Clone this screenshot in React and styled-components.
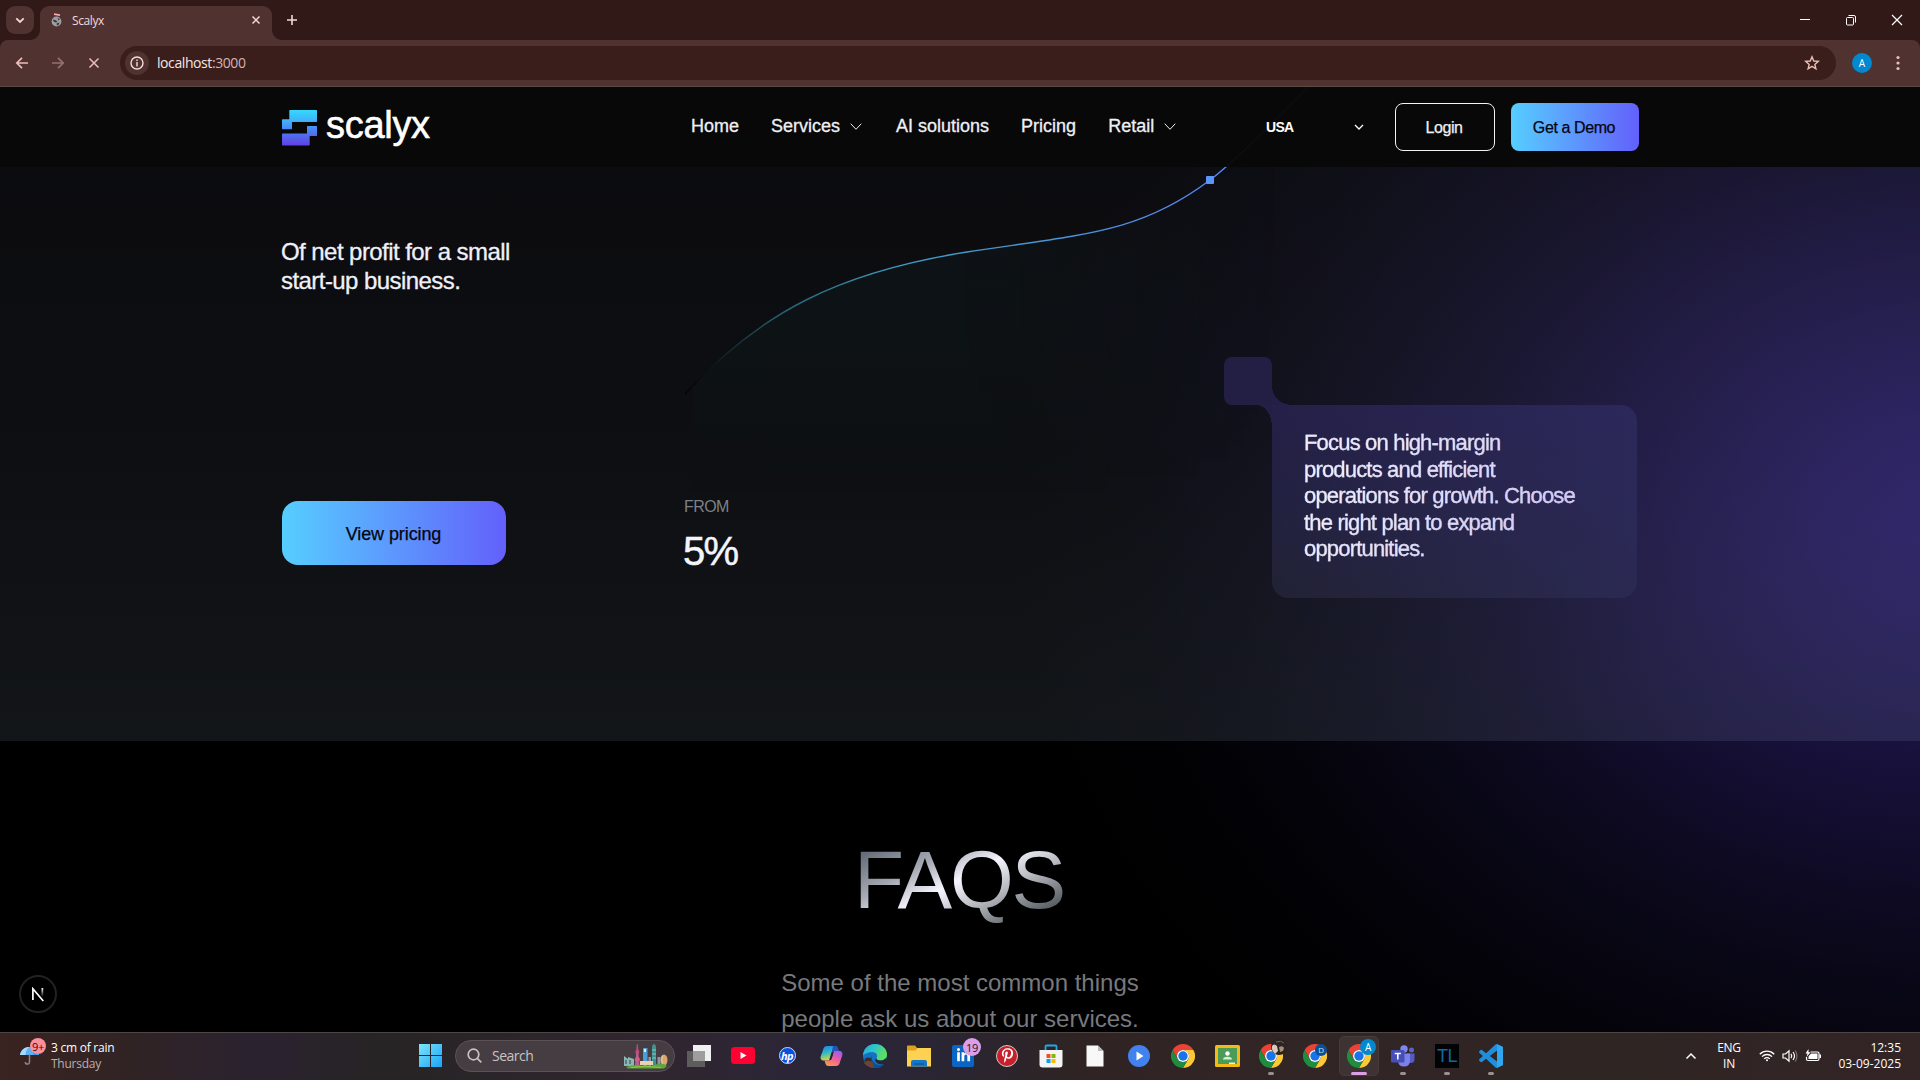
import React from "react";
import styled, { createGlobalStyle, css } from "styled-components";
import { FaPinterestP, FaLinkedinIn } from "react-icons/fa";

const GlobalStyle = createGlobalStyle`
  * { box-sizing: border-box; }
  html, body { margin: 0; background: #000; overflow: hidden; }
  svg { display: block; flex: none; }
`;

const uiFont = `"Open Sans", "Noto Sans", sans-serif`;
const siteFont = `"Liberation Sans", Arial, sans-serif`;

const Screen = styled.div`
  width: 1920px;
  height: 1080px;
  display: flex;
  flex-direction: column;
  overflow: hidden;
  font-family: ${siteFont};
`;

/* ---------- browser chrome ---------- */

const TabStrip = styled.div`
  height: 40px;
  flex: none;
  display: flex;
  align-items: flex-start;
  background: #301916;
  color: #f3d9d5;
`;

const TabSearch = styled.div`
  width: 28px;
  height: 28px;
  margin: 6px 6px 0;
  border-radius: 9px;
  background: #503230;
  display: grid;
  place-items: center;
`;

const Tab = styled.div`
  position: relative;
  width: 232px;
  height: 34px;
  margin-top: 6px;
  padding: 0 10px 6px 11px;
  display: flex;
  align-items: center;
  border-radius: 9px 9px 0 0;
  background: #503230;
  &::before,
  &::after {
    content: "";
    position: absolute;
    bottom: 0;
    width: 10px;
    height: 10px;
  }
  &::before {
    left: -10px;
    background: radial-gradient(circle at 0 0, transparent 9.6px, #503230 10.2px);
  }
  &::after {
    right: -10px;
    background: radial-gradient(circle at 100% 0, transparent 9.6px, #503230 10.2px);
  }
`;

const TabTitle = styled.span`
  flex: 1;
  margin-left: 9px;
  padding-top: 1px;
  font: 12px ${uiFont};
  letter-spacing: -0.4px;
`;

const NewTab = styled.div`
  width: 28px;
  height: 28px;
  margin: 6px 0 0 6px;
  display: grid;
  place-items: center;
`;

const WindowButtons = styled.div`
  margin-left: auto;
  display: flex;
  height: 40px;
  color: #fff;
`;

const WindowButton = styled.div`
  width: 46px;
  display: grid;
  place-items: center;
`;

const ToolbarEdge = styled.div`
  height: 47px;
  flex: none;
  background: #301916;
`;

const Toolbar = styled.div`
  height: 47px;
  display: flex;
  align-items: center;
  padding-bottom: 1px;
  border-bottom: 1px solid #5e4945;
  border-radius: 8px 8px 0 0;
  background: #503230;
  color: #edbdb8;
`;

const ToolButton = styled.div`
  width: ${(p) => p.$w || 36}px;
  height: 34px;
  display: grid;
  place-items: center;
  opacity: ${(p) => (p.$dim ? 0.45 : 1)};
`;

const AddressBar = styled.div`
  flex: 1;
  height: 34px;
  margin-left: 4px;
  padding: 0 16px 0 5px;
  display: flex;
  align-items: center;
  border-radius: 17px;
  background: #391e1c;
`;

const SiteInfo = styled.div`
  width: 24px;
  height: 24px;
  border-radius: 50%;
  display: grid;
  place-items: center;
  background: #503230;
  color: #f5dcd8;
`;

const Url = styled.span`
  flex: 1;
  margin-left: 8px;
  font: 14px ${uiFont};
  letter-spacing: -0.42px;
  color: #f7e6e3;
  span {
    color: #d3b3b0;
  }
`;

const Profile = styled.div`
  width: 20px;
  height: 20px;
  margin: 0 4px 0 16px;
  border-radius: 50%;
  display: grid;
  place-items: center;
  background: #0288d1;
  color: #fff;
  font: 10px ${uiFont};
`;

/* ---------- site ---------- */

const Page = styled.main`
  position: relative;
  height: 945px;
  flex: none;
  display: flex;
  flex-direction: column;
  overflow: hidden;
  background:
    radial-gradient(
      ellipse 940px 760px at 1950px 425px,
      rgba(37, 26, 95, 1) 0%,
      rgba(36, 25, 91, 0.95) 12%,
      rgba(34, 24, 85, 0.84) 24%,
      rgba(31, 22, 77, 0.7) 37%,
      rgba(28, 20, 68, 0.53) 50%,
      rgba(25, 20, 60, 0.36) 63%,
      rgba(22, 18, 54, 0.2) 76%,
      rgba(18, 16, 46, 0.08) 88%,
      rgba(12, 10, 30, 0) 100%
    ),
    #000;
`;

const Nav = styled.nav`
  position: relative;
  z-index: 2;
  height: 80px;
  flex: none;
  display: flex;
  align-items: center;
  padding: 0 281px 0 282px;
  background: rgba(8, 8, 8, 0.96);
  color: #eef0f6;
`;

const Brand = styled.div`
  width: 409px;
  height: 80px;
  display: flex;
  align-items: center;
  gap: 9px;
`;

const Wordmark = styled.span`
  font-size: 38px;
  line-height: 44px;
  letter-spacing: -0.3px;
  color: #fff;
  -webkit-text-stroke: 0.6px #fff;
  padding-bottom: 5px;
`;

const NavLinks = styled.div`
  display: flex;
  gap: 32px;
  padding-bottom: 2px;
`;

const NavLink = styled.div`
  display: flex;
  align-items: center;
  gap: 8px;
  font-size: 18px;
  line-height: 24px;
  white-space: nowrap;
  -webkit-text-stroke: 0.3px #eef0f6;
`;

const Region = styled.div`
  width: 98px;
  margin-left: auto;
  margin-right: 31px;
  display: flex;
  align-items: center;
  justify-content: space-between;
  font-size: 14px;
  font-weight: 700;
  letter-spacing: -0.7px;
  color: #fff;
`;

const gradientFill = css`
  background: linear-gradient(90deg, #56ceff 0%, #6360fb 100%);
  color: #050510;
`;

const NavButton = styled.div`
  width: ${(p) => p.$w}px;
  height: 48px;
  margin-left: ${(p) => p.$gap || 0}px;
  display: grid;
  place-items: center;
  padding: 1px 2px 0 0;
  border-radius: 8px;
  font-size: 16px;
  letter-spacing: -0.4px;
  -webkit-text-stroke: 0.25px currentColor;
  ${(p) =>
    p.$filled
      ? gradientFill
      : css`
          border: 1px solid #f4f4f8;
          color: #eef0f6;
        `}
`;

const CurveLayer = styled.svg`
  position: absolute;
  left: 0;
  top: 0;
`;

const Hero = styled.section`
  height: 574px;
  flex: none;
  display: flex;
  padding: 70px 283px 176px 281px;
  background: linear-gradient(
    180deg,
    rgba(188, 190, 240, 0.062) 0%,
    rgba(178, 198, 236, 0.075) 50%,
    rgba(176, 204, 236, 0.105) 100%
  );
`;

const Pitch = styled.div`
  width: 403px;
  display: flex;
  flex-direction: column;
  justify-content: space-between;
`;

const Lead = styled.p`
  margin: 0;
  font-size: 24px;
  line-height: 29px;
  letter-spacing: -0.56px;
  color: #eff1fa;
  -webkit-text-stroke: 0.3px #eff1fa;
`;

const PricingButton = styled.div`
  width: 224px;
  height: 64px;
  margin-left: 1px;
  padding: 3px 1px 0 0;
  display: grid;
  place-items: center;
  border-radius: 16px;
  font-size: 18px;
  letter-spacing: -0.1px;
  -webkit-text-stroke: 0.25px currentColor;
  ${gradientFill}
`;

const Stat = styled.div`
  align-self: flex-end;
  height: 71px;
  margin-bottom: -4px;
  display: flex;
  flex-direction: column;
  justify-content: space-between;
`;

const StatLabel = styled.span`
  font-size: 16px;
  line-height: 18px;
  letter-spacing: -0.6px;
  color: #7d8086;
`;

const StatValue = styled.span`
  font-size: 40px;
  line-height: 36px;
  letter-spacing: -1.7px;
  color: #f3f5fd;
  -webkit-text-stroke: 0.5px #f3f5fd;
  margin-left: -1px;
`;

const Callout = styled.div`
  margin-left: auto;
  margin-top: 120px;
  width: 413px;
  height: 241px;
  flex: none;
  display: flex;
  flex-direction: column;
`;

const Notch = styled.div`
  position: relative;
  width: 48px;
  height: 48px;
  flex: none;
  border-radius: 8px 8px 0 8px;
  background: #231f44;
  &::before,
  &::after {
    content: "";
    position: absolute;
  }
  &::before {
    left: 48px;
    bottom: 0;
    width: 20px;
    height: 18px;
    background: radial-gradient(ellipse 20px 18px at 100% 0, transparent 98%, #231f46 100%);
  }
  &::after {
    right: 0;
    top: 48px;
    width: 15px;
    height: 22px;
    background: radial-gradient(ellipse 15px 22px at 0 100%, transparent 98%, #231f46 100%);
  }
`;

const CalloutCard = styled.div`
  width: 365px;
  height: 193px;
  flex: none;
  align-self: flex-end;
  padding: 25px 32px;
  border-radius: 0 16px 16px 16px;
  font-size: 22px;
  line-height: 26.5px;
  letter-spacing: -0.82px;
  background: linear-gradient(90deg, rgba(50, 47, 106, 0) 0%, rgba(50, 47, 106, 0.55) 100%),
    linear-gradient(180deg, #242048 0%, #232140 50%, #212234 100%);
  span {
    display: block;
    background: linear-gradient(115deg, #eef0fb 15%, #d3cbf5 75%);
    background-clip: text;
    -webkit-background-clip: text;
    color: transparent;
    -webkit-text-stroke: 0.3px #dfdcf6;
  }
`;

const Faq = styled.section`
  flex: 1;
  display: flex;
  flex-direction: column;
  align-items: center;
  padding-top: 93px;
`;

const FaqTitle = styled.h2`
  margin: 0 0 0 -2px;
  font-size: 82px;
  line-height: 92px;
  font-weight: 400;
  letter-spacing: -2.2px;
  background: linear-gradient(152deg, #5f6773 10%, #a5a9b3 33%, #f6f5ff 50%, #b9bbc1 66%, #565c61 88%);
  background-clip: text;
  -webkit-background-clip: text;
  color: transparent;
`;

const FaqText = styled.p`
  margin: 39px 0 0;
  font-size: 24px;
  line-height: 36px;
  text-align: center;
  white-space: pre;
  color: #77797d;
`;

const DevBadge = styled.div`
  position: absolute;
  left: 19px;
  bottom: 19px;
  width: 38px;
  height: 38px;
  border-radius: 50%;
  border: 2px solid #222;
  background: #000;
  display: grid;
  place-items: center;
`;

/* ---------- taskbar ---------- */

const Taskbar = styled.footer`
  height: 48px;
  flex: none;
  display: flex;
  align-items: center;
  padding-bottom: 2px;
  border-top: 1px solid #4c4646;
  font: 12px/16px ${uiFont};
  color: #fff;
  background: linear-gradient(
    90deg,
    #3a2321 0,
    #302325 140px,
    #2b2230 250px,
    #272425 370px,
    #2a2528 480px,
    #31252f 640px,
    #292638 840px,
    #2a2531 960px,
    #2f2423 1080px,
    #312525 1300px,
    #2f2523 1640px,
    #332426 1920px
  );
`;

const Weather = styled.div`
  width: 408px;
  display: flex;
  align-items: center;
  padding-left: 19px;
`;

const WeatherText = styled.div`
  display: flex;
  flex-direction: column;
  margin-left: 4px;
  letter-spacing: -0.25px;
  span {
    color: #b9aeae;
  }
`;

const SearchBox = styled.div`
  width: 220px;
  height: 32px;
  margin: 0 2px 0 3px;
  padding: 0 5px 0 11px;
  display: flex;
  align-items: center;
  border-radius: 16px;
  border: 1px solid #5b5256;
  background: #453d42;
  color: #c9c2c4;
  span {
    flex: 1;
    margin-left: 10px;
    font-size: 14px;
    letter-spacing: -0.5px;
  }
`;

const AppSlot = styled.div`
  position: relative;
  width: 44px;
  height: 47px;
  flex: none;
  display: grid;
  place-items: center;
  &::after {
    content: "";
    display: ${(p) => (p.$running || p.$active ? "block" : "none")};
    position: absolute;
    bottom: 4px;
    left: 50%;
    width: ${(p) => (p.$active ? 16 : 6)}px;
    height: 3px;
    border-radius: 2px;
    transform: translateX(-50%);
    background: ${(p) => (p.$active ? "#dc9fe6" : "#9a9292")};
  }
`;

const ActivePlate = styled.div`
  width: 40px;
  height: 40px;
  display: grid;
  place-items: center;
  border-radius: 5px;
  border: 1px solid #453b3a;
  background: #3d3332;
`;

const AppTile = styled.div`
  width: ${(p) => p.$size || 22}px;
  height: ${(p) => p.$size || 22}px;
  border-radius: ${(p) => p.$radius || "0"};
  background: ${(p) => p.$bg};
  border: ${(p) => p.$border || "none"};
  display: grid;
  place-items: center;
  color: ${(p) => p.$fg || "#fff"};
  font: ${(p) => p.$font || "inherit"};
  letter-spacing: ${(p) => p.$track || "0"};
`;

const Bubble = styled.div`
  position: absolute;
  left: ${(p) => p.$x}px;
  top: ${(p) => p.$y}px;
  width: ${(p) => p.$size}px;
  height: ${(p) => p.$size}px;
  border-radius: 50%;
  display: grid;
  place-items: center;
  background: ${(p) => p.$bg};
  color: ${(p) => p.$fg || "#fff"};
  font-size: ${(p) => p.$fs || 10}px;
  line-height: 1;
  letter-spacing: -0.4px;
`;

const WeatherIcon = styled.div`
  position: relative;
  width: 28px;
  height: 47px;
  display: grid;
  align-items: center;
`;

const Tray = styled.div`
  margin-left: auto;
  display: flex;
  align-items: center;
  padding-right: 19px;
`;

const Language = styled.div`
  margin: 0 17px 0 19px;
  width: 26px;
  text-align: center;
  letter-spacing: -0.3px;
`;

const TrayIcons = styled.div`
  display: flex;
  align-items: center;
  gap: 7px;
`;

const Clock = styled.div`
  width: 79px;
  margin-left: 0;
  text-align: right;
`;

/* ---------- drawings ---------- */

const Line = ({ w = 16, h = w, box = `0 0 ${w} ${h}`, sw = 1.6, d, children }) => (
  <svg width={w} height={h} viewBox={box} fill="none" stroke="currentColor" strokeWidth={sw}>
    {d && <path d={d} />}
    {children}
  </svg>
);

const Chevron = ({ sw = 1 }) => <Line w={16} sw={sw} d="M2.700 5.700 8 11.300l5.300-5.600" />;

const LogoMark = () => (
  <svg width="35" height="37" viewBox="0 -0.500 35 37">
    <defs>
      <linearGradient id="mark" x1="0" y1="0" x2="0" y2="36" gradientUnits="userSpaceOnUse">
        <stop offset="0" stopColor="#32dcfd" />
        <stop offset="0.3" stopColor="#41b2fb" />
        <stop offset="0.6" stopColor="#4c7df4" />
        <stop offset="1" stopColor="#6040e4" />
      </linearGradient>
    </defs>
    <g fill="url(#mark)" stroke="url(#mark)" strokeWidth="1.400" strokeLinejoin="round">
      <path d="M8 1.200h26.300v10.600H9.300v7.300H.7V10.500H8z" />
      <path d="M25.700 17.300h8.600v8.600H27v9.400H.7V24.700h25z" />
    </g>
  </svg>
);

const GrowthCurve = () => (
  <CurveLayer width="1920" height="945" viewBox="0 87 1920 945" fill="none">
    <defs>
      <linearGradient id="curve" x1="685" y1="0" x2="1225" y2="0" gradientUnits="userSpaceOnUse">
        <stop offset="0" stopColor="#020303" />
        <stop offset="0.05" stopColor="#0c1417" />
        <stop offset="0.17" stopColor="#265b6b" />
        <stop offset="0.4" stopColor="#3f9cc0" />
        <stop offset="0.7" stopColor="#4b92d8" />
        <stop offset="1" stopColor="#5684f0" />
      </linearGradient>
      <linearGradient id="area" x1="0" y1="180" x2="0" y2="500" gradientUnits="userSpaceOnUse">
        <stop offset="0" stopColor="#2a80a0" stopOpacity="0.055" />
        <stop offset="0.5" stopColor="#1f8a8a" stopOpacity="0.04" />
        <stop offset="1" stopColor="#1f8a8a" stopOpacity="0" />
      </linearGradient>
      <linearGradient id="sweep" x1="693" y1="0" x2="1300" y2="0" gradientUnits="userSpaceOnUse">
        <stop offset="0" stopColor="#fff" />
        <stop offset="0.4" stopColor="#fff" />
        <stop offset="0.7" stopColor="#777" />
        <stop offset="0.98" stopColor="#000" />
      </linearGradient>
      <mask id="areaMask">
        <rect x="693" y="87" width="640" height="420" fill="url(#sweep)" />
      </mask>
    </defs>
    <path
      d="M693 385C766 310 840 272 967 252C1085 234 1140 233 1210 180L1308 87V500H693Z"
      fill="url(#area)"
      mask="url(#areaMask)"
    />
    <path
      d="M685 394C760 312 840 272 967 252C1085 234 1140 233 1210 180Q1240 157 1308 87"
      stroke="url(#curve)"
      strokeWidth="1.400"
    />
    <rect x="1206" y="176" width="8" height="8" rx="1" fill="#5b94fb" />
  </CurveLayer>
);

const Chrome = () => (
  <svg width="24" height="24" viewBox="0 0 24 24">
    <path fill="#ea4335" d="M1.6 6A12 12 0 0 1 22.4 6L12 6A6 6 0 0 0 6.8 15Z" />
    <path fill="#fcc934" d="M22.4 6A12 12 0 0 1 12 24L17.2 15A6 6 0 0 0 12 6Z" />
    <path fill="#1e8e3e" d="M12 24A12 12 0 0 1 1.6 6L6.8 15A6 6 0 0 0 17.2 15Z" />
    <circle cx="12" cy="12" r="6" fill="#fff" />
    <circle cx="12" cy="12" r="4.7" fill="#1a73e8" />
  </svg>
);

const Umbrella = () => (
  <svg width="21" height="21" viewBox="0 0 21 21">
    <path d="M1 10C2 4.500 6 2 10.500 2S19 4.500 20 10z" fill="#5db1f5" />
    <path d="M1 10C2 4.500 6 2 10.500 2 7.500 4 6.500 7 6.500 10z" fill="#a8d8fb" />
    <path d="M10.500 2c3 2 4 5 4 8H20C19 4.500 15 2 10.500 2z" fill="#3f97ea" />
    <path d="M10.500 9.500v7.500a2.100 2.100 0 0 1-4.200 0" fill="none" stroke="#8b8684" strokeWidth="1.500" />
  </svg>
);

const WindowsLogo = () => (
  <svg width="23" height="23" viewBox="0 0 23 23">
    <defs>
      <linearGradient id="win" x1="0" y1="0" x2="1" y2="1" gradientUnits="objectBoundingBox">
        <stop offset="0" stopColor="#7be6fb" />
        <stop offset="1" stopColor="#1aa3f7" />
      </linearGradient>
    </defs>
    <path fill="url(#win)" d="M0 0h11v11H0zM12 0h11v11H12zM0 12h11v11H0zM12 12h11v11H12z" />
  </svg>
);

const Skyline = () => (
  <svg width="46" height="26" viewBox="0 0 46 26">
    <path d="M1 13l4 3v-2l6 2v7H1z" fill="#8fb5b0" />
    <path d="M2 17h2v4H2zM6 17h2v4H6z" fill="#4f8092" />
    <path d="M13.800 1h1l.7 7h-2.400z" fill="#a3557e" />
    <circle cx="14.300" cy="9" r="2" fill="#c9477c" />
    <path d="M13.200 10h2.200l1.300 13h-4.800z" fill="#b0628c" />
    <circle cx="14.300" cy="16.500" r="2.500" fill="#d65a87" />
    <path d="M20 5h4.500v18H20z" fill="#4a9ed8" />
    <path d="M21 6h2v3h-2z" fill="#ddecf5" />
    <path d="M29 3l2-2.500L33 3v20h-4z" fill="#3e938f" />
    <path d="M29 7h4M29 11h4M29 15h4" stroke="#9bd3c4" strokeWidth=".8" />
    <path d="M25.500 14h2.500v9h-2.500zM34.500 14h3v9h-3z" fill="#879bb3" />
    <ellipse cx="41" cy="17" rx="3.500" ry="5.500" fill="#dba66d" />
    <path d="M39.500 12.500q-1.500 4 0 9" stroke="#f0cf9c" fill="none" />
    <path d="M17 18h13v4H17z" fill="#eccfae" />
    <path d="M3 24q8-3 16-1.500t14-1 11 1.500l-3 2.500H5z" fill="#5da83c" />
    <path d="M8 24.500q14-2.500 30 0" stroke="#8dcb4d" fill="none" />
  </svg>
);

const TaskView = () => (
  <svg width="24" height="22" viewBox="0 0 24 22">
    <path d="M6 0h18v16H6z" fill="#f1f0f0" />
    <path d="M0 6h18v16H0z" fill="#5f5c5e" />
    <path d="M6 6h12v10H6z" fill="#9f9d9e" />
  </svg>
);

const YouTube = () => (
  <svg width="24" height="17" viewBox="0 0 24 17">
    <rect width="24" height="17" rx="3.500" fill="#ff0033" />
    <path d="M9.500 5v7l6-3.500z" fill="#fff" />
  </svg>
);

const Copilot = () => (
  <svg width="23" height="22" viewBox="0 0 23 22">
    <defs>
      <linearGradient id="cpA" x1="0" y1="0" x2="0.3" y2="1">
        <stop offset="0" stopColor="#1f7ff0" />
        <stop offset="0.5" stopColor="#2fb8c8" />
        <stop offset="1" stopColor="#d8d83a" />
      </linearGradient>
      <linearGradient id="cpB" x1="0.7" y1="0" x2="0.2" y2="1">
        <stop offset="0" stopColor="#a15bea" />
        <stop offset="0.5" stopColor="#f0609a" />
        <stop offset="1" stopColor="#fb9a50" />
      </linearGradient>
    </defs>
    <path d="M7 1h8c2 0 2.500 1.500 3 3l.7 2H14c-1.500 0-2.300.8-2.800 2.200L9 15.500H4C1 15.500 0 13.500.8 11L3.500 3.500C4 2 5 1 7 1z" fill="url(#cpA)" />
    <path d="M13 1h2c2 0 2.500 1.500 3 3l.7 2H14c-1 0-1.800.4-2.300 1.200z" fill="#2450c0" />
    <path d="M16 21H8.500c-2 0-2.700-1.200-3.200-2.700L4.500 15.500H9c1.500 0 2.300-.8 2.800-2.200L14 6h5c3 0 4 2 3.200 4.500l-2.700 8C19 20 18 21 16 21z" fill="url(#cpB)" />
    <path d="M13.300 8.500h-1.200L9.800 15q1.200-.3 1.700-1.500z" fill="#2a2533" />
  </svg>
);

const Edge = () => (
  <svg width="24" height="24" viewBox="0 0 24 24">
    <defs>
      <linearGradient id="edgeTop" x1="0" y1="0" x2="1" y2="0.4">
        <stop offset="0" stopColor="#2aa7e0" />
        <stop offset="0.5" stopColor="#2fc5c8" />
        <stop offset="1" stopColor="#5fe05a" />
      </linearGradient>
    </defs>
    <circle cx="12" cy="12" r="12" fill="#1273c4" />
    <path d="M0 12C0 5 5 0 12 0s12 5 12 10.500c0 4-3 6-6.500 6-3 0-4.500-1.500-4-2.500 1.500-2 .5-6-4.500-6-5 0-9 3-9 4z" fill="url(#edgeTop)" />
    <path d="M9 12c-1 5 3 9 8 9 2 0 4-1 5.500-2.500A12 12 0 0 1 10 23.800C6 21 6 14 9 12z" fill="#0d4f94" />
    <path d="M13.500 14c-.5 1 1 2.500 4 2.500 2.800 0 5-1.300 6-3.200V18l-2 2c-4 1-9-.5-9.500-4z" fill="#2b2632" />
    <circle cx="5" cy="17" r="3.500" fill="#3d2a26" />
    <path d="M1 19c2-3 7-3 9 0l1 4.700A12 12 0 0 1 1 19z" fill="#6b4434" />
  </svg>
);

const Folder = () => (
  <svg width="24" height="22" viewBox="0 0 24 22">
    <path d="M0 1.500Q0 .5 1 .5h7l2.500 3H24v8H0z" fill="#e0a21b" />
    <path d="M0 5.500h8.500l2-2.500H24v18.500H0z" fill="#fdd253" />
    <path d="M4 21.500V17q0-2 2-2h12q2 0 2 2v4.500z" fill="#1277c8" />
    <path d="M7 18.500h10v1H7z" fill="#0a4f8f" />
  </svg>
);

const Store = () => (
  <svg width="24" height="24" viewBox="0 0 24 24">
    <path d="M6.500 7V2.500q0-1 1-1h9q1 0 1 1V7" fill="none" stroke="#22a7e8" strokeWidth="1.800" />
    <path d="M.5 6h23v14.500q0 3-3 3h-17q-3 0-3-3z" fill="#f4f4f4" />
    <path d="M7.500 10h4v4h-4z" fill="#f25022" />
    <path d="M12.500 10h4v4h-4z" fill="#7fba00" />
    <path d="M7.500 15h4v4h-4z" fill="#00a4ef" />
    <path d="M12.500 15h4v4h-4z" fill="#ffb900" />
  </svg>
);

const FileIcon = () => (
  <svg width="18" height="22" viewBox="0 0 18 22">
    <path d="M.5.500h11.500l5.500 5.500v15.500H.5z" fill="#f8f8f8" />
    <path d="M12 .5v5.500h5.500z" fill="#b9b9b9" />
  </svg>
);

const Player = () => (
  <svg width="22" height="22" viewBox="0 0 22 22">
    <circle cx="11" cy="11" r="11" fill="#4182ee" />
    <path d="M8.500 6.500v9l7-4.500z" fill="#fff" />
  </svg>
);

const Classroom = () => (
  <svg width="25" height="22" viewBox="0 0 25 22">
    <rect width="25" height="22" rx="1.500" fill="#f5ba15" />
    <rect x="3" y="3" width="19" height="16" fill="#4a9c56" />
    <circle cx="12.500" cy="8.500" r="2.200" fill="#fff" />
    <path d="M8 14.500q0-2.800 4.500-2.800t4.500 2.800z" fill="#d7eedd" />
    <path d="M14 17.500h6V19h-6z" fill="#eee" />
  </svg>
);

const Teams = () => (
  <svg width="24" height="22" viewBox="0 0 24 22">
    <circle cx="20.500" cy="5" r="2.500" fill="#5b62c8" />
    <path d="M16 8.500h7.500v6q0 3.500-4 3.500H16z" fill="#545bc4" />
    <circle cx="13" cy="4" r="3.700" fill="#7f88ea" />
    <path d="M7 8.500h12v7q0 6-6 6t-6-6z" fill="#7b83eb" />
    <rect y="5" width="13.500" height="12.500" rx="1" fill="#464eb8" />
    <path d="M3.700 8.500h6.200M6.800 8.500v6" stroke="#fff" strokeWidth="1.600" />
  </svg>
);

const VsCode = () => (
  <svg width="24" height="24" viewBox="0 0 24 24">
    <path
      fill="#1d8fdc"
      d="M23.150 2.587L18.210.210a1.494 1.494 0 0 0-1.705.290l-9.460 8.630-4.120-3.128a.999.999 0 0 0-1.276.057L.327 7.261A1 1 0 0 0 .326 8.740L3.899 12 .326 15.260a1 1 0 0 0 .001 1.479L1.650 17.940a.999.999 0 0 0 1.276.057l4.120-3.128 9.460 8.630a1.492 1.492 0 0 0 1.704.290l4.942-2.377A1.500 1.500 0 0 0 24 20.060V3.939a1.500 1.500 0 0 0-.850-1.352zm-5.146 14.861L10.826 12l7.178-5.448v10.896z"
    />
    <path d="M18 .2l5.150 2.400q.85.5.85 1.400v16q0 1-.85 1.400L18 23.800z" fill="#2fa6ee" />
  </svg>
);

const NextMark = () => (
  <svg width="14" height="15" viewBox="0 0 14 15">
    <defs>
      <linearGradient id="nx" x1="0" y1="0" x2="0" y2="1">
        <stop offset="0" stopColor="#fff" />
        <stop offset="1" stopColor="#fff" stopOpacity="0.1" />
      </linearGradient>
    </defs>
    <path d="M1.900 13V1.800L12.300 14" fill="none" stroke="#fff" strokeWidth="1.700" />
    <path d="M10.500 1h1.700v8h-1.700z" fill="url(#nx)" />
  </svg>
);

const Globe = () => (
  <svg width="12" height="14" viewBox="0 0 12 14">
    <circle cx="5.500" cy="8.500" r="4.900" fill="#9aa0a6" />
    <path d="M2 6.500l3 .7 1.500 1.800-2 .5L2.500 8.500zM6.500 5l2.500 1-1.500 1.500zM5.500 10.500l3-1-1 2.500-1.500.5z" fill="#4a3433" />
    <path d="M3 1.200l6 1" stroke="#f3aaa5" strokeWidth="1.800" />
  </svg>
);

const Portrait = () => (
  <svg width="16" height="17" viewBox="0 0 16 17">
    <circle cx="8" cy="8" r="8" fill="#2b2422" />
    <path d="M1 7q2-3 5 0l1 5-3 3q-4-4-3-8z" fill="#d8cabd" />
    <path d="M8 8q4-2 5 1l-1 3-3 1z" fill="#a98d7b" />
    <path d="M5 3q5-2 8 1" stroke="#6c625c" fill="none" />
  </svg>
);

export default function App() {
  return (
    <Screen>
      <GlobalStyle />
      <TabStrip>
        <TabSearch>
          <Line w={12} sw={1.8} d="M2.300 4.300 6 8l3.700-3.700" />
        </TabSearch>
        <Tab>
          <Globe />
          <TabTitle>Scalyx</TabTitle>
          <Line w={12} sw={1.5} d="M2.500 2.500l7 7M9.500 2.500l-7 7" />
        </Tab>
        <NewTab>
          <Line w={12} sw={1.6} d="M6 1v10M1 6h10" />
        </NewTab>
        <WindowButtons>
          <WindowButton>
            <Line w={10} sw={1} d="M0 4.500h10" />
          </WindowButton>
          <WindowButton>
            <Line w={12} sw={1}>
              <rect x="1.500" y="3.500" width="7" height="7.500" rx="1" />
              <path d="M3.500 1.500h5.500a1.500 1.500 0 0 1 1.500 1.500v5.500" />
            </Line>
          </WindowButton>
          <WindowButton>
            <Line w={12} sw={1.2} d="M1 1l10 10M11 1L1 11" />
          </WindowButton>
        </WindowButtons>
      </TabStrip>
      <ToolbarEdge>
        <Toolbar>
          <ToolButton $w={44}>
            <Line w={14} sw={1.7} d="M13 7H2M7 1.800 1.800 7 7 12.200" />
          </ToolButton>
          <ToolButton $w={28} $dim>
            <Line w={14} sw={1.7} d="M1 7h11M7 1.800 12.200 7 7 12.200" />
          </ToolButton>
          <ToolButton $w={44}>
            <Line w={12} sw={1.5} d="M1.500 1.500l9 9M10.500 1.500l-9 9" />
          </ToolButton>
          <AddressBar>
            <SiteInfo>
              <Line w={14} sw={1.4}>
                <circle cx="7" cy="7" r="6" />
                <path d="M7 6v4.500M7 3.500v1.500" />
              </Line>
            </SiteInfo>
            <Url>
              localhost<span>:3000</span>
            </Url>
            <Line w={16} sw={1.4} d="M8 1.800l1.750 4.200 4.550.4-3.450 3 1.050 4.400L8 11.400l-3.900 2.400 1.050-4.400-3.450-3 4.550-.4z" />
          </AddressBar>
          <Profile>A</Profile>
          <ToolButton $w={44}>
            <svg width="4" height="16" viewBox="0 0 4 16" fill="currentColor">
              <circle cx="2" cy="2.500" r="1.600" />
              <circle cx="2" cy="8" r="1.600" />
              <circle cx="2" cy="13.500" r="1.600" />
            </svg>
          </ToolButton>
        </Toolbar>
      </ToolbarEdge>

      <Page>
        <GrowthCurve />
        <Nav>
          <Brand>
            <LogoMark />
            <Wordmark>scalyx</Wordmark>
          </Brand>
          <NavLinks>
            <NavLink>Home</NavLink>
            <NavLink>
              Services <Chevron />
            </NavLink>
            <NavLink>AI solutions</NavLink>
            <NavLink>Pricing</NavLink>
            <NavLink>
              Retail <Chevron />
            </NavLink>
          </NavLinks>
          <Region>
            USA
            <Line w={10} sw={1.3} d="M1 3l4 4 4-4" />
          </Region>
          <NavButton $w={100}>Login</NavButton>
          <NavButton $w={128} $gap={16} $filled>
            Get a Demo
          </NavButton>
        </Nav>
        <Hero>
          <Pitch>
            <Lead>
              Of net profit for a small
              <br />
              start-up business.
            </Lead>
            <PricingButton>View pricing</PricingButton>
          </Pitch>
          <Stat>
            <StatLabel>FROM</StatLabel>
            <StatValue>5%</StatValue>
          </Stat>
          <Callout>
            <Notch />
            <CalloutCard>
              <span>
                Focus on high-margin
                <br />
                products and efficient
                <br />
                operations for growth. Choose
                <br />
                the right plan to expand
                <br />
                opportunities.
              </span>
            </CalloutCard>
          </Callout>
        </Hero>
        <Faq>
          <FaqTitle>FAQS</FaqTitle>
          <FaqText>{"Some of the most common things\npeople ask us about our services."}</FaqText>
        </Faq>
        <DevBadge>
          <NextMark />
        </DevBadge>
      </Page>

      <Taskbar>
        <Weather>
          <WeatherIcon>
            <Umbrella />
            <Bubble $x={11} $y={6} $size={16} $bg="#fb8f9c" $fg="#2a1416" $fs={11}>
              9+
            </Bubble>
          </WeatherIcon>
          <WeatherText>
            3 cm of rain
            <span>Thursday</span>
          </WeatherText>
        </Weather>
        <AppSlot>
          <WindowsLogo />
        </AppSlot>
        <SearchBox>
          <Line w={15} sw={1.7}>
            <circle cx="6.500" cy="6.500" r="5.300" />
            <path d="M10.300 10.300l4 4" />
          </Line>
          <span>Search</span>
          <Skyline />
        </SearchBox>
        <AppSlot>
          <TaskView />
        </AppSlot>
        <AppSlot>
          <YouTube />
        </AppSlot>
        <AppSlot>
          <AppTile $size={17} $radius="50%" $bg="#0b4fe0" $border="1px solid #cfd8f2" $font={`italic 700 11px/1 ${uiFont}`} $track="-0.5px">
            hp
          </AppTile>
        </AppSlot>
        <AppSlot>
          <Copilot />
        </AppSlot>
        <AppSlot>
          <Edge />
        </AppSlot>
        <AppSlot>
          <Folder />
        </AppSlot>
        <AppSlot>
          <AppTile $radius="2px" $bg="#0a66c2">
            <FaLinkedinIn size={15} />
          </AppTile>
          <Bubble $x={22} $y={6} $size={18} $bg="#dc9fe6" $fg="#1d1320" $fs={11}>
            19
          </Bubble>
        </AppSlot>
        <AppSlot>
          <AppTile $radius="50%" $bg="#c5202b" $border="1.500px solid #d8c8c8">
            <FaPinterestP size={15} />
          </AppTile>
        </AppSlot>
        <AppSlot>
          <Store />
        </AppSlot>
        <AppSlot>
          <FileIcon />
        </AppSlot>
        <AppSlot>
          <Player />
        </AppSlot>
        <AppSlot>
          <Chrome />
        </AppSlot>
        <AppSlot>
          <Classroom />
        </AppSlot>
        <AppSlot $running>
          <Chrome />
          <Bubble $x={22} $y={7} $size={16} $bg="transparent">
            <Portrait />
          </Bubble>
        </AppSlot>
        <AppSlot>
          <Chrome />
          <Bubble $x={22} $y={12} $size={12} $bg="#0b4f94" $fg="#bfe0fa" $fs={8}>
            D
          </Bubble>
        </AppSlot>
        <AppSlot $active>
          <ActivePlate>
            <Chrome />
          </ActivePlate>
          <Bubble $x={23} $y={7} $size={16} $bg="#0288d1">
            A
          </Bubble>
        </AppSlot>
        <AppSlot $running>
          <Teams />
        </AppSlot>
        <AppSlot $running>
          <AppTile $size={24} $bg="#000407" $fg="#17679f" $font={`18px/1 ${siteFont}`} $track="-0.5px">
            TL
          </AppTile>
        </AppSlot>
        <AppSlot $running>
          <VsCode />
        </AppSlot>
        <Tray>
          <Line w={12} sw={1.500} d="M1.500 8.500 6 4l4.500 4.500" />
          <Language>
            ENG
            <br />
            IN
          </Language>
          <TrayIcons>
            <svg width="16" height="13" viewBox="0 0 16 13" fill="none" stroke="#fff" strokeWidth="1.300">
              <path d="M.8 5.200a10 10 0 0 1 14.400 0M3 7.600a7 7 0 0 1 10 0M5.200 9.900a4 4 0 0 1 5.600 0" />
              <circle cx="8" cy="11.300" r="1" fill="#fff" stroke="none" />
            </svg>
            <svg width="16" height="14" viewBox="0 0 16 14" fill="none" stroke="#fff" strokeWidth="1.200">
              <path d="M1 5h2.500L7 1.800v10.400L3.500 9H1zM9 4.800q1.500 2.200 0 4.400M11 3q3 4 0 8" />
              <path d="M13.200 1.500q3.500 5.500 0 11" opacity=".35" />
            </svg>
            <svg width="17" height="13" viewBox="0 0 17 13">
              <path d="M5.500 3h7q1.500 0 1.500 1.500V10q0 1.500-1.500 1.500H3Q1.500 11.500 1.500 10V8" fill="none" stroke="#fff" strokeWidth="1.200" />
              <path d="M6 4.500h6.500V10H3.500V7.500zM14.500 5.500h1.500v3.500h-1.500z" fill="#fff" />
              <path d="M3.500 0 .5 4.500h2L1.500 8 5.500 3.200h-2z" fill="#fff" />
            </svg>
          </TrayIcons>
          <Clock>
            12:35
            <br />
            03-09-2025
          </Clock>
        </Tray>
      </Taskbar>
    </Screen>
  );
}
